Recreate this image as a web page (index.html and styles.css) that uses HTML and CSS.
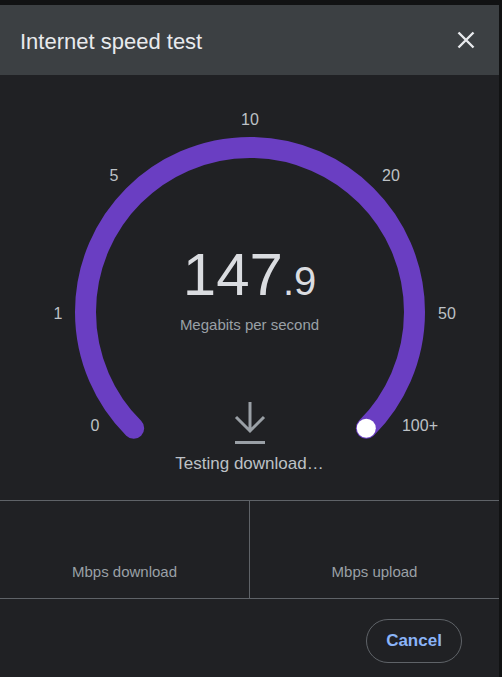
FILE: index.html
```html
<!DOCTYPE html>
<html>
<head>
    <title>Internet speed test</title>
    <link rel="stylesheet" href="styles.css">
</head>
<body>
    <div class="dialog">
        <div class="dialog-head">
            <h1>Internet speed test</h1>
            <button class="close" aria-label="Close">
                <svg width="18" height="18" viewBox="0 0 18 18">
                    <path d="M1.5 1.5 L16.5 16.5 M16.5 1.5 L1.5 16.5" stroke="#e8eaed" stroke-width="2.4" fill="none"/>
                </svg>
            </button>
        </div>

        <div class="gauge">
            <svg class="dial" width="499" height="425" viewBox="0 0 499 425">
                <path d="M133.7 353.3 A164.5 164.5 0 1 1 366.3 353.3" stroke="#6a3ec2" stroke-width="21" stroke-linecap="round" fill="none"/>
                <circle cx="366.3" cy="353.3" r="9.5" fill="#ffffff"/>
                <g class="ticks">
                    <text x="250" y="44">10</text>
                    <text x="114" y="100">5</text>
                    <text x="391" y="100">20</text>
                    <text x="58" y="238">1</text>
                    <text x="447" y="238">50</text>
                    <text x="95" y="350">0</text>
                    <text x="420" y="350">100+</text>
                </g>
            </svg>

            <div class="reading">147<span class="decimal">.9</span></div>
            <div class="unit">Megabits per second</div>

            <svg class="dl-icon" width="32" height="44" viewBox="0 0 32 44">
                <path d="M16 1 V30 M2 16 L16 30 L30 16" stroke="#9aa0a6" stroke-width="3" fill="none"/>
                <path d="M1 41.5 H31" stroke="#9aa0a6" stroke-width="3"/>
            </svg>
            <div class="status">Testing download…</div>
        </div>

        <div class="stats">
            <div class="stat">Mbps download</div>
            <div class="stat">Mbps upload</div>
        </div>

        <div class="dialog-foot">
            <button class="cancel">Cancel</button>
        </div>
    </div>
</body>
</html>
```

FILE: styles.css
```css
body {
    margin: 0;
    background: #111213;
    font-family: "Liberation Sans", Arial, sans-serif;
    height: 677px;
    overflow: hidden;
}

.dialog {
    margin-top: 5px;
    width: 499px;
    height: 672px;
    background: #202124;
}

.dialog-head {
    height: 70px;
    background: #3c4043;
    display: flex;
    align-items: center;
    justify-content: space-between;
    padding: 0 24px 0 20px;
}
.dialog-head h1 {
    margin: 0;
    font-size: 22px;
    font-weight: normal;
    color: #e8eaed;
    padding-top: 3px;
}
.close {
    background: none;
    border: none;
    padding: 0;
    width: 18px;
    height: 18px;
    cursor: pointer;
}
.close svg { display: block; }

.gauge {
    position: relative;
    height: 425px;
    text-align: center;
}
.dial {
    position: absolute;
    left: 0;
    top: 0;
}
.ticks text {
    font-family: "Liberation Sans", Arial, sans-serif;
    font-size: 16px;
    fill: #bdc1c6;
    text-anchor: middle;
    dominant-baseline: central;
}

.reading {
    position: relative;
    padding-top: 170px;
    font-size: 60px;
    line-height: 60px;
    color: #dadce0;
}
.decimal { font-size: 40px; }
.unit {
    position: relative;
    margin-top: 5px;
    font-size: 15px;
    line-height: 18px;
    color: #9aa0a6;
}
.dl-icon {
    position: relative;
    display: block;
    margin: 67px auto 0;
}
.status {
    position: relative;
    margin-top: 9px;
    font-size: 17px;
    line-height: 20px;
    color: #bdc1c6;
}

.stats {
    display: flex;
    border-top: 1px solid #5f6368;
    border-bottom: 1px solid #5f6368;
}
.stat {
    flex: 1;
    height: 97px;
    box-sizing: border-box;
    padding-top: 62px;
    text-align: center;
    font-size: 15px;
    line-height: 18px;
    color: #9aa0a6;
}
.stat + .stat { border-left: 1px solid #5f6368; }

.dialog-foot {
    display: flex;
    justify-content: flex-end;
    padding: 20px 37px 0 0;
}
.cancel {
    width: 96px;
    height: 44px;
    border: 1px solid #5f6368;
    border-radius: 22px;
    background: transparent;
    color: #8ab4f8;
    font-family: "Liberation Sans", Arial, sans-serif;
    font-size: 17px;
    font-weight: bold;
    cursor: pointer;
}
```
